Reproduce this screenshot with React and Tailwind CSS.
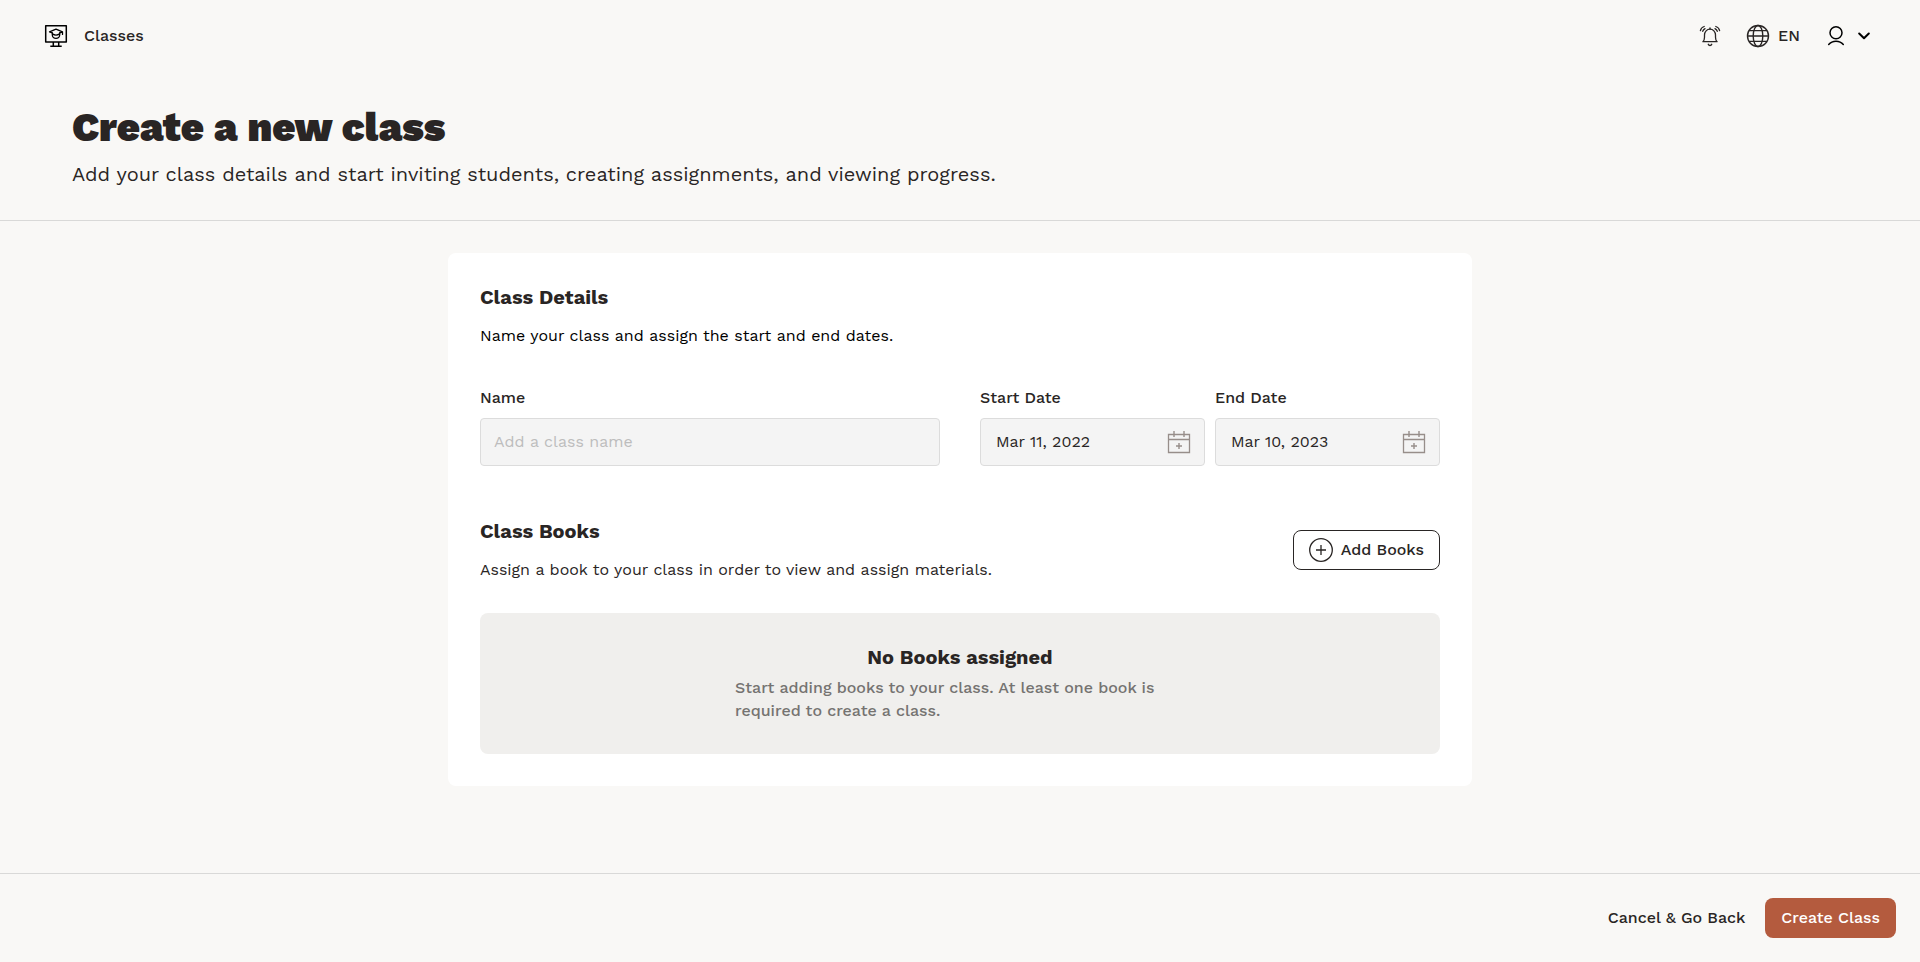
import React from "react";

function ClassesIcon() {
  return (
    <svg width="24" height="24" viewBox="0 0 24 24" fill="none" stroke="#000" aria-hidden="true">
      <rect x="1.7" y="1.7" width="20.6" height="16.3" strokeWidth="1.5" strokeLinejoin="round" />
      <path d="M9.3 18v3.8M14.7 18v3.8M6.300 22.200h11.400" strokeWidth="1.5" />
      <path d="M8.300 8.900 5.500 7.800 12 5.200l6.500 2.600-2.800 1.100M18.500 8v2.400" strokeWidth="1.300" strokeLinejoin="round" strokeLinecap="round" />
      <path d="M8.300 8.600v2.500c0 1.800 1.700 3.300 3.700 3.300s3.700-1.500 3.700-3.300V8.600M8.400 9.900q3.600 2.400 7.200 0" strokeWidth="1.300" />
    </svg>
  );
}

function BellIcon() {
  return (
    <svg width="24" height="24" viewBox="0 0 24 24" fill="none" stroke="#292524" strokeWidth="1.3" strokeLinecap="round" aria-hidden="true">
      <path d="M4.900 17.700c1.400-1.200 1.600-2.500 1.600-4.400v-2.200C6.500 7.700 8.900 5.200 12 5.200s5.500 2.500 5.500 5.900v2.200c0 1.900.2 3.200 1.600 4.400z" strokeLinejoin="round" />
      <path d="M12 3.900v1.200M10.300 20.300c.3.900.9 1.300 1.700 1.300s1.400-.4 1.700-1.300" strokeWidth="1.400" />
      <path d="M2.400 6.600c.4-1.900 1.700-3.400 3.800-4.100M4.700 7.300c.4-1.200 1.100-2.100 2.300-2.700M21.600 6.600c-.4-1.900-1.700-3.400-3.800-4.100M19.300 7.300c-.4-1.200-1.100-2.100-2.300-2.700" />
    </svg>
  );
}

function GlobeIcon() {
  return (
    <svg width="24" height="24" viewBox="0 0 24 24" fill="none" stroke="#292524" strokeWidth="1.400" aria-hidden="true">
      <circle cx="12" cy="12" r="10.500" />
      <ellipse cx="12" cy="12" rx="4.800" ry="10.500" />
      <path d="M1.500 12h21M3 6.600h18M3 17.400h18" />
    </svg>
  );
}

function UserIcon() {
  return (
    <svg width="24" height="24" viewBox="0 0 24 24" fill="none" stroke="#000" strokeWidth="1.500" strokeLinecap="round" aria-hidden="true">
      <circle cx="12" cy="8.700" r="6" />
      <path d="M4.700 20.500c1.900-2.300 4.400-3.300 7.300-3.300s5.400 1 7.300 3.300" />
    </svg>
  );
}

function ChevronIcon() {
  return (
    <svg width="12" height="8" viewBox="0 0 12 8" fill="none" stroke="#000" strokeWidth="2" strokeLinecap="round" strokeLinejoin="round" aria-hidden="true">
      <path d="M1.200 1.500 6 6.300l4.800-4.800" />
    </svg>
  );
}

function CalendarIcon() {
  return (
    <svg width="24" height="24" viewBox="0 0 24 24" fill="none" stroke="#978e8a" aria-hidden="true">
      <path d="M1.500 4.500h21v18h-21z" strokeWidth="1.300" />
      <path d="M1.500 9.500h21" strokeWidth="1.500" />
      <path d="M7 1v6M17 1v6M12 13v6M9 16h6" strokeWidth="1.400" />
    </svg>
  );
}

function PlusCircleIcon() {
  return (
    <svg width="24" height="24" viewBox="0 0 24 24" fill="none" stroke="#292524" strokeWidth="1.300" aria-hidden="true">
      <circle cx="12" cy="12" r="11.300" />
      <path d="M12 7v10M7 12h10" />
    </svg>
  );
}

function DateField({ id, label, value }) {
  return (
    <div className="flex min-w-0 flex-1 flex-col gap-2">
      <label htmlFor={id} className="font-medium">{label}</label>
      <div className="flex h-12 items-center rounded border border-[#dcdcdc] bg-[#f4f4f4] pr-[13px] pl-[15px]">
        <input id={id} type="text" defaultValue={value} className="w-full min-w-0 flex-1 bg-transparent outline-none" />
        <button type="button" aria-label={"Choose " + label} className="shrink-0">
          <CalendarIcon />
        </button>
      </div>
    </div>
  );
}

export default function App() {
  return (
    <div className="flex min-h-screen flex-col bg-[#f9f8f6] font-['Work_Sans',Inter,sans-serif] text-base leading-6 text-[#292524]">
      <header className="flex h-[72px] items-center justify-between px-11">
        <a href="#classes" className="flex items-center gap-4 font-medium">
          <ClassesIcon />
          Classes
        </a>
        <div className="flex items-center gap-6">
          <button type="button" aria-label="Notifications"><BellIcon /></button>
          <button type="button" className="flex items-center gap-2 font-medium">
            <GlobeIcon />
            EN
          </button>
          <button type="button" aria-label="Account" className="flex items-center gap-[10px] pr-[6px]">
            <UserIcon />
            <ChevronIcon />
          </button>
        </div>
      </header>

      <section className="border-b border-[#d9d9d8] px-[72px] py-8">
        <h1 className="text-[40px] leading-[48px] font-black">Create a new class</h1>
        <p className="mt-2 text-xl leading-7">
          Add your class details and start inviting students, creating assignments, and viewing progress.
        </p>
      </section>

      <main className="flex-1 px-6 py-8">
        <form className="mx-auto max-w-[1024px] rounded-lg bg-white p-8">
          <h2 className="text-xl leading-6 font-bold">Class Details</h2>
          <p className="mt-4 leading-[22px] text-black">Name your class and assign the start and end dates.</p>
          <div className="mt-[39px] flex gap-10">
            <div className="flex min-w-0 flex-1 flex-col gap-2">
              <label htmlFor="class-name" className="font-medium">Name</label>
              <input
                id="class-name"
                type="text"
                placeholder="Add a class name"
                className="h-12 rounded border border-[#dcdcdc] bg-[#f4f4f4] px-[13px] pb-px outline-none placeholder:text-[#bdbdbd]"
              />
            </div>
            <div className="flex min-w-0 flex-1 gap-[10px]">
              <DateField id="start-date" label="Start Date" value="Mar 11, 2022" />
              <DateField id="end-date" label="End Date" value="Mar 10, 2023" />
            </div>
          </div>

          <div className="mt-[53px] flex items-center justify-between">
            <div>
              <h2 className="text-xl leading-6 font-bold">Class Books</h2>
              <p className="mt-4 leading-[22px]">Assign a book to your class in order to view and assign materials.</p>
            </div>
            <button type="button" className="flex h-10 items-center gap-2 rounded-lg border border-[#292524] px-[15px] font-medium">
              <PlusCircleIcon />
              Add Books
            </button>
          </div>

          <div className="mt-8 flex flex-col items-center rounded-lg bg-[#f0efed] px-8 py-8">
            <h3 className="text-xl leading-6 font-bold">No Books assigned</h3>
            <p className="mt-[7px] w-full max-w-[450px] leading-[23px] font-medium text-[#757371]">
              Start adding books to your class. At least one book is required to create a class.
            </p>
          </div>
        </form>
      </main>

      <footer className="flex items-center justify-end gap-5 border-t border-[#d9d9d8] px-6 py-6 font-medium">
        <a href="#back">Cancel &amp; Go Back</a>
        <button type="button" className="h-10 rounded-lg bg-[#b45b3e] px-4 text-white">Create Class</button>
      </footer>
    </div>
  );
}
